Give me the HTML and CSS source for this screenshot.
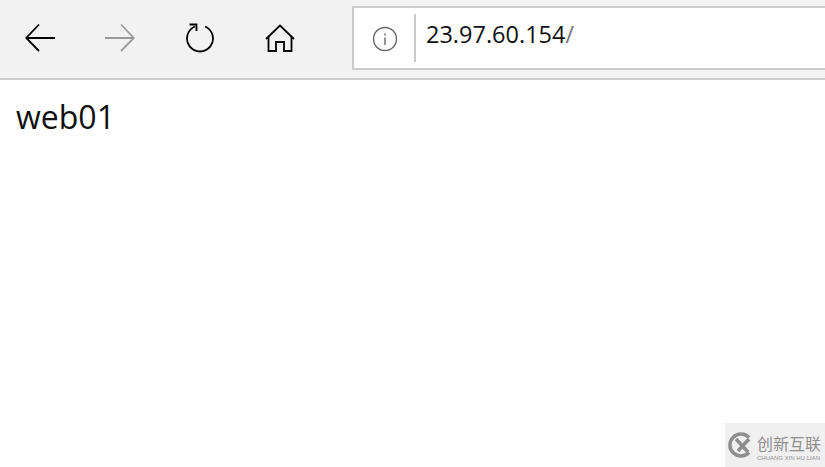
FILE: index.html
```html
<!DOCTYPE html>
<html lang="en">
<head>
  <meta charset="UTF-8" />
  <title>web01</title>
  <link rel="stylesheet" href="styles.css">
</head>
<body>

  <!-- Browser toolbar -->
  <div class="toolbar">
    <div class="nav-btn">
      <svg width="30" height="30" viewBox="0 0 30 30"><path class="icon" d="M30 15H1.5M14 1.5L1.2 15L14 28"/></svg>
    </div>
    <div class="nav-btn">
      <svg width="30" height="30" viewBox="0 0 30 30"><path class="icon icon-off" d="M0 15H28.5M16 1.5L28.8 15L16 28"/></svg>
    </div>
    <div class="nav-btn">
      <svg width="30" height="30" viewBox="0 0 30 30"><path class="icon" d="M20 3.5A13 13 0 1 1 10 3.5M4.5 1.5H11.5V8"/></svg>
    </div>
    <div class="nav-btn">
      <svg width="30" height="30" viewBox="0 0 30 30"><path class="icon" d="M1 16L15 2.5L29 16M3.5 14V28H11V19H19V28H26.5V14"/></svg>
    </div>

    <div class="address-bar">
      <div class="site-info">
        <svg width="26" height="26" viewBox="0 0 26 26"><circle class="info" cx="13" cy="13" r="11.5"/><path class="info" d="M13 11.5V19M13 7.5V9.5"/></svg>
      </div>
      <div class="url">23.97.60.154<span class="url-path">/</span></div>
    </div>
  </div>

  <div class="content">web01</div>

  <!-- Watermark -->
  <div class="watermark">
    <svg width="26" height="26" viewBox="0 0 26 26"><path class="mark" d="M21 5.5A11 11 0 1 0 21 20.500M8 7L20 20M21 7L10 19"/></svg>
    <div class="mark-text">
      <div class="mark-cn">创新互联</div>
      <div class="mark-en">CHUANG XIN HU LIAN</div>
    </div>
  </div>

</body>
</html>
```

FILE: styles.css
```css
html, body {
  height: 100%;
}

body {
  margin: 0;
  background-color: #fff;
  font-family: 'Open Sans', 'Noto Sans', sans-serif;
  color: #000;
  overflow: hidden;
}

.toolbar {
  display: flex;
  height: 78px;
  background-color: #f2f2f2;
  border-bottom: 2px solid #cdcdcd;
}

.nav-btn {
  width: 80px;
  height: 76px;
  display: flex;
  justify-content: center;
  align-items: center;
}

.icon {
  fill: none;
  stroke: #000;
  stroke-width: 1.8;
}

.icon-off {
  stroke: #999;
}

.address-bar {
  flex: 1;
  display: flex;
  margin: 6px -2px 8px 32px;
  background-color: #fff;
  border: 2px solid #ccc;
}

.site-info {
  width: 62px;
  margin: 6px 0;
  padding: 2px 0 0 2px;
  box-sizing: border-box;
  border-right: 2px solid #ccc;
  display: flex;
  justify-content: center;
  align-items: center;
}

.info {
  fill: none;
  stroke: #666;
  stroke-width: 1.4;
}

.url {
  padding: 5px 0 0 10px;
  font-size: 23.5px;
  line-height: 42px;
  color: #111;
}

.url-path {
  color: #777;
}

.content {
  padding: 19px 16px;
  font-size: 32px;
  line-height: 36px;
  color: #111;
}

.watermark {
  position: absolute;
  right: 0;
  bottom: 0;
  width: 100px;
  height: 44px;
  box-sizing: border-box;
  padding-left: 3px;
  display: flex;
  align-items: center;
  gap: 3px;
  background-color: #f0f0f0;
}

.mark {
  fill: none;
  stroke: #8e8e8e;
  stroke-width: 3.5;
}

.mark-text {
  padding-top: 2px;
  color: #8e8e8e;
}

.mark-cn {
  font-family: 'Noto Sans CJK SC', sans-serif;
  font-size: 16px;
  white-space: nowrap;
}

.mark-en {
  font-family: 'Liberation Sans', sans-serif;
  font-size: 6px;
  white-space: nowrap;
}
```
